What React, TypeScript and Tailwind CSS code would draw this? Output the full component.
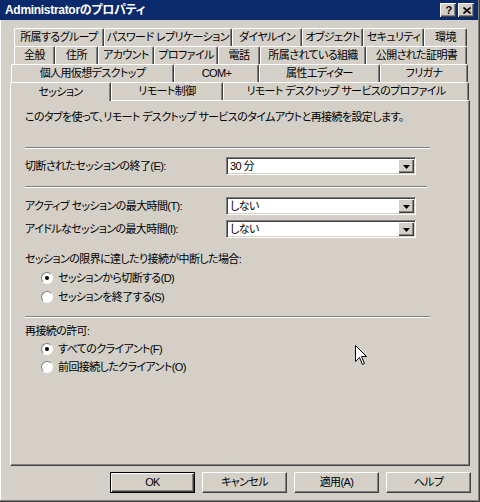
import React from 'react';

const jp = "font-['Liberation_Sans','Noto_Sans_CJK_JP',sans-serif] [font-feature-settings:'palt'] tracking-[-0.6px]";

const tabRows = [
  {
    indent: 'ml-[14px]',
    tabs: [
      { label: '所属するグループ', w: 'w-[90px]' },
      { label: 'パスワード レプリケーション', w: 'w-[128px]' },
      { label: 'ダイヤルイン', w: 'w-[70px]' },
      { label: 'オブジェクト', w: 'w-[61px]' },
      { label: 'セキュリティ', w: 'w-[61px]' },
      { label: '環境', w: 'w-[43px]' },
    ],
  },
  {
    indent: 'ml-[14px]',
    tabs: [
      { label: '全般', w: 'w-[41px]' },
      { label: '住所', w: 'w-[43px]' },
      { label: 'アカウント', w: 'w-[56px]' },
      { label: 'プロファイル', w: 'w-[64px]' },
      { label: '電話', w: 'w-[42px]' },
      { label: '所属されている組織', w: 'w-[106px]' },
      { label: '公開された証明書', w: 'w-[101px]' },
    ],
  },
  {
    indent: 'ml-[11px]',
    tabs: [
      { label: '個人用仮想デスクトップ', w: 'w-[163px]' },
      { label: 'COM+', w: 'w-[85px]' },
      { label: '属性エディター', w: 'w-[121px]' },
      { label: 'フリガナ', w: 'w-[88px]' },
    ],
  },
  {
    indent: 'ml-[10px]',
    tabs: [
      { label: 'セッション', w: 'w-[101px]', selected: true },
      { label: 'リモート制御', w: 'w-[112px]' },
      { label: 'リモート デスクトップ サービスのプロファイル', w: 'w-[246px]' },
    ],
  },
];

function Separator({ w }: { w: string }) {
  return <div className={`${w} h-[2px] border-t border-t-[#808080] border-b border-b-white`} />;
}

function Select({ value }: { value: string }) {
  return (
    <div className="w-[190px] h-[18px] flex bg-white border border-t-[#808080] border-l-[#808080] border-r-white border-b-white shadow-[inset_1px_1px_0_#404040,inset_-1px_-1px_0_#d4d0c8]">
      <span className="flex-1 pl-[3px] pt-[1px] text-[11px] leading-[14px] text-black">{value}</span>
      <span className="w-[16px] h-[14px] mt-[1px] mr-[1px] flex items-center justify-center bg-[#d4d0c8] border-t border-l border-t-white border-l-white shadow-[inset_-1px_-1px_0_#404040,inset_-2px_-2px_0_#808080]">
        <svg width="7" height="4" viewBox="0 0 7 4">
          <path d="M0 0 H7 L3.5 4 Z" fill="#000" />
        </svg>
      </span>
    </div>
  );
}

function Radio({ label, checked }: { label: string; checked?: boolean }) {
  return (
    <div className="h-[16px] flex items-center pl-[16px] gap-[5px]">
      <span className="w-[12px] h-[12px] rounded-full bg-white border border-t-[#808080] border-l-[#808080] border-r-white border-b-white flex items-center justify-center">
        {checked && <span className="w-[4px] h-[4px] rounded-full bg-black" />}
      </span>
      <span className="text-[11px] leading-[16px] text-black">{label}</span>
    </div>
  );
}

function Button({ label, isDefault }: { label: string; isDefault?: boolean }) {
  return (
    <div
      className={`w-[85px] h-[21px] flex items-center justify-center text-[11px] text-black bg-[#d4d0c8] ${
        isDefault
          ? 'border border-black shadow-[inset_1px_1px_0_#fff,inset_-1px_-1px_0_#404040,inset_-2px_-2px_0_#808080]'
          : 'border-t border-l border-white border-r border-b border-r-[#404040] border-b-[#404040] shadow-[inset_-1px_-1px_0_#808080]'
      }`}
    >
      {label}
    </div>
  );
}

export default function App() {
  return (
    <div className={`relative w-[480px] h-[502px] bg-[#d4d0c8] overflow-hidden ${jp} shadow-[inset_-1px_-1px_0_#404040,inset_-2px_-2px_0_#808080,inset_1px_1px_0_#ffffff]`}>
      {/* title bar */}
      <div className="h-[20px] mr-[2px] bg-[#0b2a6c] flex items-center pl-[5px] pr-[4px]">
        <span className="flex-1 text-white font-bold text-[12px] leading-[20px] tracking-[-0.3px]">Administratorのプロパティ</span>
        <div className="flex gap-[2px]">
          <span className="w-[16px] h-[14px] flex items-center justify-center bg-[#d4d0c8] border-t border-l border-white shadow-[inset_-1px_-1px_0_#404040,inset_-2px_-2px_0_#808080] text-[11px] font-bold leading-none text-black">
            ?
          </span>
          <span className="w-[16px] h-[14px] flex items-center justify-center bg-[#d4d0c8] border-t border-l border-white shadow-[inset_-1px_-1px_0_#404040,inset_-2px_-2px_0_#808080]">
            <svg width="8" height="7" viewBox="0 0 8 7">
              <path d="M0.5 0.5 L7.5 6.5 M7.5 0.5 L0.5 6.5" stroke="#000" strokeWidth="1.6" />
            </svg>
          </span>
        </div>
      </div>

      {/* tabs */}
      <div className="mt-[8px] flex flex-col">
        {tabRows.map((row, r) => (
          <div key={r} className={`flex h-[18px] ${row.indent}`}>
            {row.tabs.map((t) => (
              <div
                key={t.label}
                className={`${t.w} h-[18px] shrink-0 flex items-center justify-center text-[11px] leading-none text-black bg-[#d4d0c8] whitespace-nowrap border-t border-l border-white border-r border-r-[#404040] shadow-[inset_-1px_0_0_#808080] rounded-tl-[2px] rounded-tr-[2px] ${
                  t.selected ? 'relative z-10 h-[19px]' : ''
                }`}
              >
                {t.label}
              </div>
            ))}
          </div>
        ))}
      </div>

      {/* panel */}
      <div className="ml-[10px] w-[460px] h-[366px] border-t border-l border-white border-r border-b border-r-[#404040] border-b-[#404040] shadow-[inset_-1px_-1px_0_#808080] pl-[14px] flex flex-col text-black">
        <div className="mt-[8px] h-[16px] text-[11px] leading-[16px]">
          このタブを使って、リモート デスクトップ サービスのタイムアウトと再接続を設定します。
        </div>
        <div className="mt-[22px]">
          <Separator w="w-[405px]" />
        </div>
        <div className="mt-[8px] flex items-center h-[18px]">
          <span className="w-[201px] text-[11px]">切断されたセッションの終了(E):</span>
          <Select value="30 分" />
        </div>
        <div className="mt-[11px]">
          <Separator w="w-[402px]" />
        </div>
        <div className="mt-[9px] flex items-center h-[18px]">
          <span className="w-[201px] text-[11px]">アクティブ セッションの最大時間(T):</span>
          <Select value="しない" />
        </div>
        <div className="mt-[5px] flex items-center h-[18px]">
          <span className="w-[201px] text-[11px]">アイドルなセッションの最大時間(I):</span>
          <Select value="しない" />
        </div>
        <div className="mt-[13px] h-[16px] text-[11px] leading-[16px]">
          セッションの限界に達したり接続が中断した場合:
        </div>
        <div className="mt-[3px]">
          <Radio label="セッションから切断する(D)" checked />
        </div>
        <div className="mt-[3px]">
          <Radio label="セッションを終了する(S)" />
        </div>
        <div className="mt-[11px]">
          <Separator w="w-[405px]" />
        </div>
        <div className="mt-[5px] h-[16px] text-[11px] leading-[16px]">再接続の許可:</div>
        <div className="mt-[2px]">
          <Radio label="すべてのクライアント(F)" checked />
        </div>
        <div className="mt-[2px]">
          <Radio label="前回接続したクライアント(O)" />
        </div>
      </div>

      {/* buttons */}
      <div className="mt-[6px] flex justify-end gap-[7px] pr-[9px]">
        <Button label="OK" isDefault />
        <Button label="キャンセル" />
        <Button label="適用(A)" />
        <Button label="ヘルプ" />
      </div>

      {/* mouse pointer */}
      <svg className="absolute left-[355px] top-[345px]" width="13" height="21" viewBox="0 0 13 21">
        <path d="M0.5 0.5 V16.5 L4.5 12.5 L7.5 19.5 L9.5 18.5 L6.5 11.5 H11.5 Z" fill="#fff" stroke="#000" strokeWidth="1" strokeLinejoin="miter" />
      </svg>
    </div>
  );
}
